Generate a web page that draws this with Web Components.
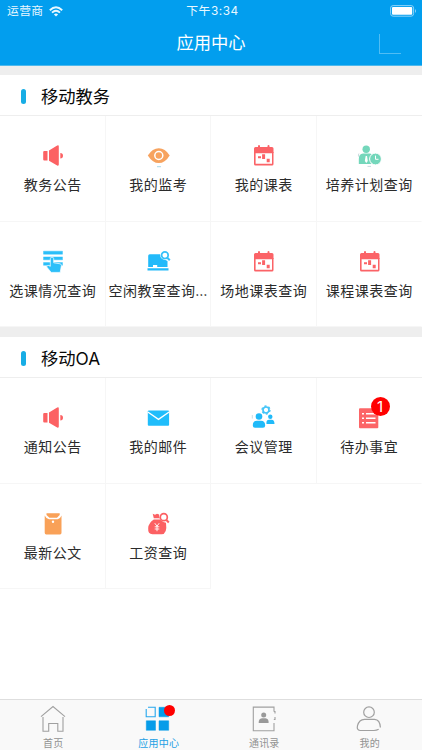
<!DOCTYPE html>
<html lang="zh-CN">
<head>
<meta charset="utf-8">
<title>应用中心</title>
<style>
html,body{margin:0;height:100%}
body{font-family:Inter,"Noto Sans CJK SC",sans-serif;background:#fff;overflow:hidden}
</style>
</head>
<body>
<app-screen></app-screen>
<script>
const calendar = `<g fill="#fb6367"><path d="M2 9V4.500Q2 3 3.500 3H6V2.200Q6 1 7 1T8 2.200V3H15.500V2.200Q15.500 1 16.500 1T17.500 2.200V3H20Q21.500 3 21.500 4.500V9Z"/><path fill-rule="evenodd" d="M2 8H21.500V20Q21.500 21.500 20 21.500H3.500Q2 21.500 2 20ZM3.600 9.200V19.700H20V9.200Z"/><path d="M6 12.300H9V14.300H6ZM10.100 10.300H13.100V15H10.100ZM14.700 14.800H17.700V18.200H14.700Z"/></g>`;
const speaker = `<g fill="#fc6163"><path d="M3.200 7H6.500V16.500H3.200Q2.200 16.500 2.200 15.500V8Q2.200 7 3.200 7ZM8 6.500L16.200 1.600Q17.800 .8 17.800 2.500V20.600Q17.800 22.200 16.200 21.500L8 16.700Z"/><path d="M19.300 9A2.700 2.700 0 0 1 19.300 14.400Z"/></g>`;
const ICONS = {
speaker, calendar,
eye:`<path fill="#f7a35f" d="M.8 11.400Q5.500 4.200 11.800 4.200T22.700 11.400Q18 19 11.800 19T.8 11.400Z"/><circle cx="11.800" cy="11.500" r="4" fill="none" stroke="#fff" stroke-width="1.500"/><path d="M10 22.700H14" stroke="#84c7dc" stroke-width=".7"/>`,
plan:`<g fill="#74d7bb"><circle cx="8.200" cy="5.200" r="3.700"/><path d="M.8 20V15Q.8 10 5 9.600H11.500Q14.500 9.800 14.500 13L12.800 20Z"/></g><path d="M7.700 12H9L9.800 17 8.300 19 6.800 17Z" fill="#fff"/><circle cx="17.500" cy="15" r="5.900" fill="#74d7bb" stroke="#fff"/><path d="M17.500 11.600V15.300H20.500" fill="none" stroke="#fff"/><path d="M1 9.500Q-.2 11 .8 12.700M9.500 22.400H13" fill="none" stroke="#a5bfc6" stroke-width=".6"/>`,
choose:`<path d="M2.500 1.200H21.500V4.200H2.500ZM2.500 6.900H21.500V9.800H2.500ZM2.500 12.500H21.500V15.300H2.500Z" fill="#2cbff9" stroke="#2cbff9" stroke-width=".4" stroke-linejoin="round"/><path d="M9.300 16.300V8.700Q9.300 7.200 11 7.200T12.700 8.700V12.800L19 13.800Q20.600 14 20.400 15.700L19.200 22.400H10.200L5.300 16.500Q7.500 14.500 9.300 16.300Z" fill="#2cbff9" stroke="#fff" stroke-width=".7"/>`,
room:`<path fill="#22bafa" d="M2.700 4.200H13.200Q13 9.500 18.500 10L20.500 11V17H10.200V15H6V17H1.200V5.700Q1.200 4.200 2.700 4.200ZM.5 18.200H21.500V20.400H.5Z"/><circle cx="17.900" cy="5.200" r="3.300" fill="none" stroke="#35c0f9" stroke-width="1.700"/><path d="M20.300 7.700L22.800 10.300" stroke="#35c0f9" stroke-width="2"/>`,
mail:`<rect x=".8" y="4.500" width="21.300" height="15.300" rx="1" fill="#20bdfb"/><path d="M.8 6L11.500 13.400 22.100 6" fill="none" stroke="#fff" stroke-width="1.300"/>`,
meeting:`<g fill="#20baf9"><circle cx="7" cy="10.500" r="3.300"/><path d="M.8 19.500Q.8 14.700 5 14.700H9Q13.200 14.700 13.200 19.500Q13.200 21.700 11 21.700H3Q.8 21.700 .8 19.500ZM14.500 18Q14 13.700 17 13.700H19.500Q22.500 13.700 22.500 18Z"/><circle cx="18.300" cy="10.800" r="2.200"/></g><circle cx="14" cy="4" r="3" fill="none" stroke="#42c4f8" stroke-width="1.700"/><circle cx="14" cy="4" r="4" fill="none" stroke="#42c4f8" stroke-width="1.300" stroke-dasharray="2.100 2.090"/><path d="M.3 9V12.500" stroke="#91b7c0" stroke-width=".5"/>`,
todo:`<rect x="1" y="2.300" width="19.300" height="20" rx="1" fill="#fc6567"/><path d="M4 7.700H6M4 12.200H6M4 16.700H6M8 7.700H17.500M8 12.200H17.500M8 16.700H17.500" stroke="#fff" stroke-width="1.500"/>`,
document:`<path fill="#f9a158" d="M3.700 3.500Q5 6.500 8 7.200H16.700Q19.500 6.500 20.500 3.500V20.800Q20.500 22.600 19 22.600H5.200Q3.700 22.600 3.700 20.800ZM5.500 1.200H18.700V3L16 5.800H8.500L5.500 3Z"/><circle cx="12" cy="9.800" r="1.200" fill="#fff"/>`,
salary:`<path fill="#fc6063" d="M5.700 1.700L8 2.800 10 1.700 12.200 2.500Q11.700 4.500 12.800 6.200H6.800ZM6.800 7.500H13Q15.500 10 19 10.700 20.500 22.200 14.500 22.200H5.500Q.7 22.200 1.200 16 1.500 11 6.800 7.500Z"/><circle cx="16.800" cy="5.200" r="3.500" fill="none" stroke="#fc6063" stroke-width="1.700"/><path d="M19.200 7.800L21.800 10.500" stroke="#fc6063" stroke-width="2"/><path d="M7.800 11.200L10 14.200 12.200 11.200M10 14V19.200M7.700 14.800H12.300M7.700 17H12.300" stroke="#fff" stroke-width=".9" fill="none"/>`,
home:`<path d="M1 11.700L13 1.500 25 11.700M3 12V26.200H8.700V18.500H17.800V26.200H23V12" fill="none" stroke="#a0a0a0" stroke-width="1.100"/>`,
apps:`<path d="M1.200 4V11.700H10.200V2.200H3" fill="none" stroke="#26a7ed" stroke-width="1.100"/><path fill="#079ce9" d="M14 2.300H23.700V11.800H14ZM1.300 15.800H10.500V25.300H1.300ZM14 15.800H23.700V25.300H14Z" stroke="#079ce9" stroke-width=".5" stroke-linejoin="round"/>`,
contacts:`<path d="M23 6.500V2.100H2.300V25.700H23V18M22.800 6.500H24V8.500M24 12V14.500H22.800" fill="none" stroke="#a0a0a0" stroke-width="1.100"/><circle cx="12.700" cy="10" r="2.500" fill="#999"/><path d="M7.700 18Q7.500 13.500 11 13.200H14.500Q17.800 13.500 17.600 18Z" fill="#999"/>`,
user:`<circle cx="13" cy="7.200" r="5.300" fill="none" stroke="#a0a0a0" stroke-width="1.200"/><path d="M24.400 22.500Q24 14.500 18.500 14.300H8.500Q3 14.500 1.500 20.700 .5 25 4 25.500H18Q20.500 25.500 22.700 24.300" fill="none" stroke="#a0a0a0" stroke-width="1.200"/>`
};
class BaseElement extends HTMLElement{
  connectedCallback(){
    if(!this.shadowRoot)this.attachShadow({mode:"open"}).innerHTML=`<style>*{box-sizing:border-box}${this.styles()}</style>${this.markup()}`;
  }
}
customElements.define("app-icon",class extends BaseElement{
  styles(){return `:host{display:block;width:24px;height:24px}svg{display:block;width:100%;height:100%;overflow:visible}`}
  markup(){return `<svg viewBox="0 0 ${this.getAttribute("size")||24} ${this.getAttribute("size")||24}">${ICONS[this.getAttribute("name")]}</svg>`}
});
customElements.define("status-bar",class extends BaseElement{
  styles(){return `:host{display:grid;grid-template-columns:1fr auto 1fr;align-items:center;height:22px;padding:0 6px 0 7px;color:#e8f8ff;font-size:11.800px;line-height:22px;letter-spacing:.35px}.left{display:flex;gap:6px;align-items:center}.time{letter-spacing:.55px;padding-left:2px}.battery{justify-self:end;margin-right:-1px}svg{display:block}`}
  markup(){return `<div class="left"><span>运营商</span><svg width="14" height="11" viewBox="0 0 14 11"><g fill="none" stroke="#e8f8ff" stroke-width="1.900"><path d="M.8 4.200Q7-1.500 13.200 4.200M3 6.600Q7 3 11 6.600"/></g><path d="M4.900 8.400Q7 6.500 9.100 8.400L7 10.500Z" fill="#e8f8ff"/></svg></div><span class="time">下午3:34</span><svg class="battery" width="27" height="12" viewBox="0 0 27 12"><rect x=".6" y=".6" width="23" height="10.600" rx="2.500" fill="none" stroke="#8cd3fa"/><rect x="2" y="2" width="20.200" height="7.800" rx="1" fill="#fff"/><path d="M25 4V8Q27 6 25 4" fill="#8cd3fa"/></svg>`}
});
customElements.define("nav-header",class extends BaseElement{
  styles(){return `:host{display:block;height:66px;background:#029eee;border-bottom:1px solid #4eb9ed;box-sizing:border-box}.bar{display:grid;grid-template-columns:1fr auto 1fr;align-items:center;height:43px;color:#fff;font-size:17.300px}.title{grid-column:2;line-height:40px;padding-bottom:2px}.action{justify-self:end;width:22px;height:20px;margin-right:21px;margin-top:1px;border-left:1px solid #50bdf4;border-bottom:1px solid #50bdf4}`}
  markup(){return `<status-bar></status-bar><div class="bar"><span class="title"><slot></slot></span><i class="action"></i></div>`}
});
customElements.define("app-tile",class extends BaseElement{
  styles(){return `:host{display:flex;flex-direction:column;align-items:center;min-width:0;height:105.500px;padding:28px 0 0 1px;border-right:1px solid #f6f6f6;border-bottom:1px solid #f6f6f6;box-sizing:border-box}:host(:nth-child(4n)){border-right-color:transparent}.wrap{position:relative;margin-left:.5px}.label{margin-top:5px;height:24px;line-height:24px;font-size:14px;letter-spacing:.46px;color:#2b2b2b;white-space:nowrap}.badge{position:absolute;left:13px;top:-9px;width:19px;height:19px;border-radius:50%;background:#f00;color:#fff;font:15px/19px Inter,sans-serif;text-align:center}`}
  markup(){const b=this.getAttribute("badge");return `<div class="wrap"><app-icon name="${this.getAttribute("icon")}"></app-icon>${b?`<span class="badge">${b}</span>`:""}</div><span class="label"><slot></slot></span>`}
});
customElements.define("app-section",class extends BaseElement{
  styles(){return `:host{display:block;background:#fff}.heading{display:flex;align-items:center;height:41px;padding:2px 0 0 21px;border-bottom:1px solid #eee;font-size:17.300px;color:#080808;gap:15px}.title{line-height:36px;padding-top:2px}.mark{width:5px;height:15px;border-radius:3px;background:#17ade5}.grid{display:grid;grid-template-columns:repeat(4,105.500px)}`}
  markup(){return `<div class="heading"><i class="mark"></i><span class="title">${this.getAttribute("heading")}</span></div><div class="grid"><slot></slot></div>`}
});
customElements.define("tab-item",class extends BaseElement{
  styles(){return `:host{display:flex;flex-direction:column;align-items:center;flex:1;padding:5px 0 0 1px;color:#929292;font-size:10px;letter-spacing:.2px;box-sizing:border-box}:host([active]){color:#1da0e4}.wrap{position:relative}app-icon{width:27px;height:27px}.label{height:18px;line-height:18px;margin-top:2px}.dot{position:absolute;left:19px;top:-.5px;width:11px;height:11px;border-radius:50%;background:#f00}`}
  markup(){return `<div class="wrap"><app-icon size="27" name="${this.getAttribute("icon")}"></app-icon>${this.hasAttribute("notice")?'<i class="dot"></i>':""}</div><span class="label"><slot></slot></span>`}
});
customElements.define("app-screen",class extends BaseElement{
  styles(){return `:host{display:flex;flex-direction:column;width:422px;height:750px;background:#fff}.gap{height:10px;background:#eee;flex:none}.top{height:9px}nav-header,app-section{flex:none}.tabs{display:flex;height:51px;margin-top:auto;border-top:1px solid #dedede;background:#f9f9f9}`}
  markup(){
    const tiles=a=>a.map(([i,t,b])=>`<app-tile icon="${i}" ${b?`badge="${b}"`:""}>${t}</app-tile>`).join("");
    return `<nav-header>应用中心</nav-header><div class="gap top"></div>
    <app-section heading="移动教务">${tiles([["speaker","教务公告"],["eye","我的监考"],["calendar","我的课表"],["plan","培养计划查询"],["choose","选课情况查询"],["room","空闲教室查询…"],["calendar","场地课表查询"],["calendar","课程课表查询"]])}</app-section><div class="gap"></div>
    <app-section heading="移动OA">${tiles([["speaker","通知公告"],["mail","我的邮件"],["meeting","会议管理"],["todo","待办事宜","1"],["document","最新公文"],["salary","工资查询"]])}</app-section>
    <div class="tabs"><tab-item icon="home">首页</tab-item><tab-item icon="apps" active notice>应用中心</tab-item><tab-item icon="contacts">通讯录</tab-item><tab-item icon="user">我的</tab-item></div>`}
});
</script>
</body>
</html>
